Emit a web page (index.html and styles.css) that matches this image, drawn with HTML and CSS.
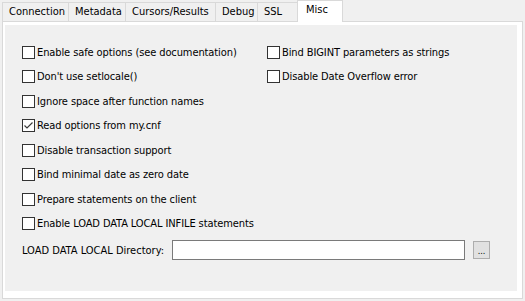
FILE: index.html
```html
<!DOCTYPE html>
<html lang="en">
<head>
    <meta charset="UTF-8">
    <title>Misc</title>
    <link rel="stylesheet" href="styles.css">
</head>
<body>
<div class="tabs">
    <div class="tab tab-connection">Connection</div>
    <div class="tab tab-metadata">Metadata</div>
    <div class="tab tab-cursors">Cursors/Results</div>
    <div class="tab tab-debug">Debug</div>
    <div class="tab tab-ssl">SSL</div>
    <div class="tab tab-misc active">Misc</div>
</div>
<div class="pane">
    <div class="page">
        <div class="options">
            <div class="column">
                <label class="check"><span class="box"></span>Enable safe options (see documentation)</label>
                <label class="check"><span class="box"></span>Don't use setlocale()</label>
                <label class="check"><span class="box"></span>Ignore space after function names</label>
                <label class="check"><span class="box checked">
                    <svg width="11" height="11" viewBox="0 0 11 11"><path d="M1.5 5.5 L4 8 L9.5 2.5" fill="none" stroke="#3c3c3c" stroke-width="1.2"/></svg>
                </span>Read options from my.cnf</label>
                <label class="check"><span class="box"></span>Disable transaction support</label>
                <label class="check"><span class="box"></span>Bind minimal date as zero date</label>
                <label class="check"><span class="box"></span>Prepare statements on the client</label>
                <label class="check"><span class="box"></span>Enable LOAD DATA LOCAL INFILE statements</label>
            </div>
            <div class="column">
                <label class="check"><span class="box"></span>Bind BIGINT parameters as strings</label>
                <label class="check"><span class="box"></span>Disable Date Overflow error</label>
            </div>
        </div>
        <div class="dir-row">
            <div class="dir-label">LOAD DATA LOCAL Directory:</div>
            <div class="dir-input"></div>
            <div class="dir-button">...</div>
        </div>
    </div>
</div>
</body>
</html>
```

FILE: styles.css
```css
body {
    margin: 0;
    background: #f0f0f0;
    font-family: 'DejaVu Sans Condensed', 'DejaVu Sans', sans-serif;
    font-stretch: condensed;
    font-size: 11px;
    color: #000000;
    width: 525px;
    height: 301px;
    overflow: hidden;
}

.tabs {
    display: flex;
    align-items: flex-end;
    height: 21px;
    padding-left: 2px;
    position: relative;
    z-index: 1;
}

.tab {
    box-sizing: border-box;
    height: 19px;
    line-height: 18px;
    padding-left: 6px;
    border: 1px solid #d9d9d9;
    border-bottom: none;
    margin-right: -1px;
    background: #f0f0f0;
    white-space: nowrap;
}

.tab-connection { width: 67px; }
.tab-metadata { width: 58px; }
.tab-cursors { width: 91px; }
.tab-debug { width: 43px; }
.tab-ssl { width: 41px; }

.tab.active {
    width: 46px;
    height: 22px;
    line-height: 17px;
    padding-left: 8px;
    margin-bottom: -1px;
    background: #ffffff;
}

.pane {
    box-sizing: border-box;
    margin: 0 2px;
    height: 278px;
    border: 1px solid #d9d9d9;
    background: #ffffff;
    padding: 3px 5px 7px 2px;
}

.page {
    height: 100%;
    background: #f0f0f0;
    padding: 15px 0 0 17px;
    box-sizing: border-box;
}

.options {
    display: grid;
    grid-template-columns: 245px auto;
}

.check {
    display: flex;
    align-items: center;
    height: 24.5px;
    white-space: nowrap;
    letter-spacing: -0.1px;
}

.box {
    box-sizing: border-box;
    width: 13px;
    height: 13px;
    border: 1px solid #333333;
    background: #ffffff;
    margin-right: 2px;
    display: flex;
    align-items: center;
    justify-content: center;
    flex: none;
}

.dir-row {
    display: flex;
    align-items: center;
    margin-top: 4px;
}

.dir-label {
    width: 150px;
    white-space: nowrap;
}

.dir-input {
    box-sizing: border-box;
    width: 293px;
    height: 20px;
    border: 1px solid #7a7a7a;
    background: #ffffff;
}

.dir-button {
    box-sizing: border-box;
    width: 17px;
    height: 18px;
    margin-left: 8px;
    border: 1px solid #adadad;
    background: #e1e1e1;
    font-size: 9px;
    line-height: 18px;
    text-align: center;
}
```
